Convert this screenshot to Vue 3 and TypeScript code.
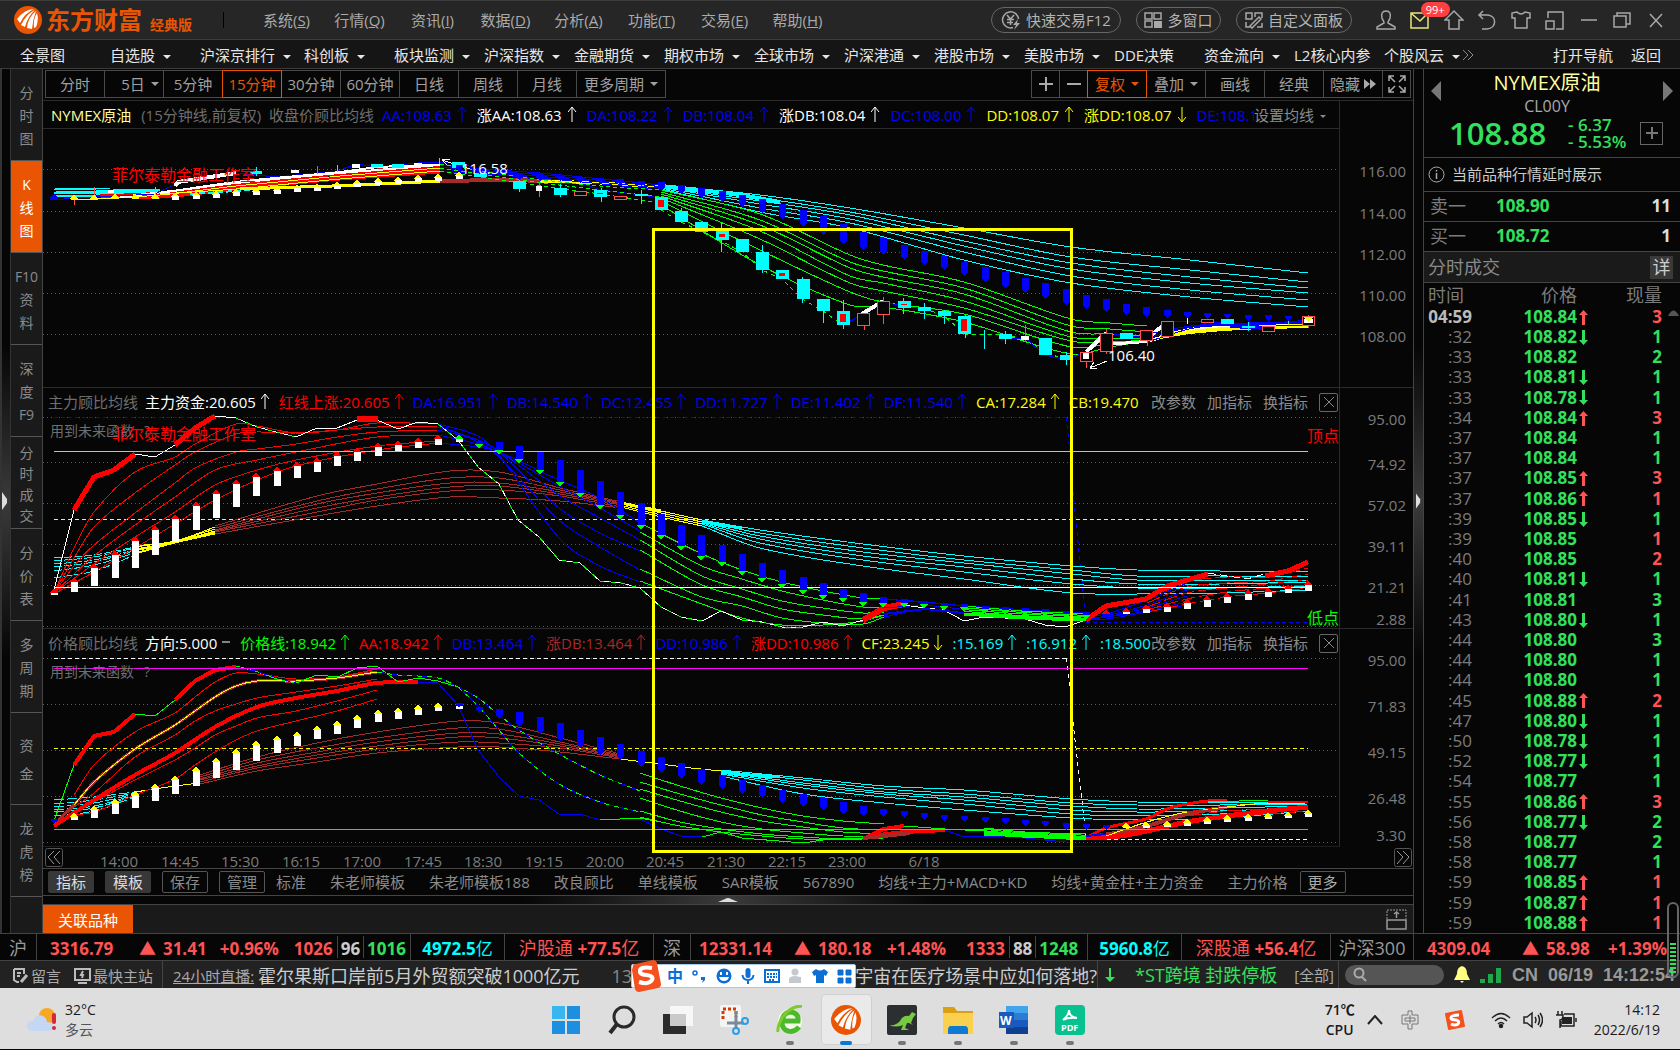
<script setup lang="ts">
type Pt = [number, number]
interface Line { d: string; c: string; w?: number; dash?: string }
interface Box { x: number; t: number; b: number; w: number; c: string; hollow?: boolean }
interface Wick { x: number; t: number; b: number; c: string }
interface Mark { d: string; c: string }
interface Label { x: number; y: number; t: string; c: string; cls?: string }
interface Reading { t: string; c: string; a?: 'up' | 'down' | 'flat' }
interface Panel {
  name: string
  top: number
  height: number
  grid: number[]
  axis: { y: number; t: string }[]
  lines: Line[]
  boxes: Box[]
  wicks: Wick[]
  marks: Mark[]
  labels: Label[]
}

const CYAN = '#00ffff'
const BLUE = '#0000ff'
const GREEN = '#00ff00'
const RED = '#ff0000'
const YELLOW = '#ffff00'
const BROWN = '#a52a2a'
const WHITE = '#ffffff'

const LEFT = 54
const STEP = 20.23
const LAST = 1308
const barX = (i: number): number => Math.round(LEFT + STEP * i)

const parse = (s: string): Pt[] =>
  s.trim().split(/\s+/).map((p) => p.split(',').map(Number) as Pt)

const straight = (s: string): string => 'M' + parse(s).map((p) => p.join(' ')).join('L')

const curveOf = (p: Pt[]): string => {
  let d = `M${p[0][0]} ${p[0][1]}`
  for (let i = 0; i < p.length - 1; i++) {
    const a = p[Math.max(0, i - 1)]
    const b = p[i]
    const c = p[i + 1]
    const e = p[Math.min(p.length - 1, i + 2)]
    const k = (c[0] - b[0]) / 3
    const mb = (c[1] - a[1]) / Math.max(1, c[0] - a[0])
    const mc = (e[1] - b[1]) / Math.max(1, e[0] - b[0])
    d += `C${b[0] + k} ${b[1] + mb * k} ${c[0] - k} ${c[1] - mc * k} ${c[0]} ${c[1]}`
  }
  return d
}
const smooth = (s: string): string => curveOf(parse(s))

/* A bundle of averages: each column is x:y1,y2,... and every row becomes one line. */
const bundle = (cols: string, c: string, dash?: string): Line[] => {
  const parsed = cols.trim().split(/\s+/).map((col) => {
    const [x, ys] = col.split(':')
    return { x: Number(x), ys: ys.split(',').map(Number) }
  })
  return parsed[0].ys.map((_, r) => ({ d: curveOf(parsed.map((q) => [q.x, q.ys[r]] as Pt)), c, dash }))
}

/* n evenly spread lines between an upper and a lower edge. */
const spread = (upper: string, lower: string, n: number, c: string): Line[] => {
  const u = parse(upper)
  const l = parse(lower)
  return Array.from({ length: n }, (_, k) => ({
    d: curveOf(u.map((p, i) => [p[0], p[1] + ((l[i][1] - p[1]) * k) / (n - 1)] as Pt)),
    c,
  }))
}

const level = (y: number, c: string, dash?: string, to = LAST, from = LEFT): Line => ({ d: `M${from} ${y}H${to}`, c, dash })
const ranges = (s: string): Pt[] => s.trim().split(/\s+/).map((p) => p.split('-').map(Number) as Pt)
const tipUp = (x: number, y: number, c: string): Mark => ({ d: `M${x - 4} ${y + 1}L${x} ${y - 4}L${x + 4} ${y + 1}Z`, c })
const tipDown = (x: number, y: number, c: string): Mark => ({ d: `M${x - 4} ${y - 1}L${x} ${y + 4}L${x + 4} ${y - 1}Z`, c })
const shield = (x: number, t: number, b: number): Mark => ({
  d: `M${x - 3} ${t}H${x + 4}V${Math.max(t + 2, b - 3)}L${x} ${b + 1}L${x - 3} ${Math.max(t + 2, b - 3)}Z`,
  c: BLUE,
})

/* ---------- price panel ---------- */
const priceShields = ranges(
  '165-170 168-173 171-176 174-179 175-180 176-180 177-182 178-183 179-184 181-185 182-190 185-193 188-197 191-201 195-206 199-212 204-218 210-226 216-234 224-243 232-249 238-254 245-259 251-264 256-269 262-275 267-281 272-287 278-292 283-298 289-304 295-308 299-311 304-314 307-316 310-317 312-317 313-318 314-318 315-320 315-320 316-320',
)
const priceTips = [198, 198, 197, 197, 197, 196, 195, 194, 192, 191, 190, 188, 187, 185, 183, 181, 180, 178, 177, 175]
const candle = (i: number, t: number, b: number, kind: 'down' | 'hot' | 'up'): Box[] => {
  const x = barX(i)
  if (kind === 'up') return [{ x: x - 6, t, b, w: 12, c: '#ff5050', hollow: true }]
  const body: Box = { x: x - 6, t, b, w: 13, c: CYAN }
  return kind === 'hot' ? [body, { x: x - 3, t: t + 3, b: b - 3, w: 6, c: RED }] : [body]
}
const price: Panel = {
  name: 'price',
  top: 129,
  height: 258,
  grid: [169, 211, 252, 293, 334],
  axis: [
    { y: 171, t: '116.00' }, { y: 213, t: '114.00' }, { y: 254, t: '112.00' },
    { y: 295, t: '110.00' }, { y: 336, t: '108.00' },
  ],
  lines: [
    ...spread('54,188 110,189 160,189', '54,197 110,196 160,195', 7, CYAN),
    ...spread('100,195 160,192 236,182 340,172 440,164', '100,197 160,198 236,190 340,180 440,173', 9, RED),
    { d: smooth('110,196 160,194 236,188 340,178 440,171'), c: RED, w: 4 },
    { d: smooth('74,200 160,195 236,186 340,176 440,168'), c: YELLOW },
    { d: smooth('160,194 236,189 340,179 440,171'), c: YELLOW },
    { d: smooth('120,197 180,190 236,183 340,173 440,165'), c: WHITE, w: 2 },
    { d: straight('190,194 236,191 262,189'), c: CYAN, w: 2, dash: '6 3' },
    { d: straight('54,200 74,198 94,197 155,194 175,184 195,180 236,173 276,177 337,171 357,164 377,167 418,163 440,162 461,163 480,170 500,172 519,177 539,180 560,184 580,183 601,190 641,195 661,198'), c: BLUE },
    { d: straight('175,186 178,182 236,173'), c: WHITE, w: 4 },
    { d: smooth('160,193 236,182 340,172 380,167 440,165'), c: WHITE, w: 2 },
    { d: smooth('240,189 300,187 360,185 440,181'), c: YELLOW, w: 3 },
    { d: straight('440,181 500,180 555,181'), c: BROWN, w: 4 },
    { d: smooth('540,181 600,183 661,187'), c: YELLOW, w: 3 },
    ...spread('440,165 480,169 540,173 661,185', '440,171 480,174 540,178 661,190', 4, BLUE),
    ...bundle('440:164,168,171 520:177,180,183 600:186,190,194 661:190,197,203', GREEN, '4 3'),
    { d: smooth('661,186 700,190 740,195 780,202'), c: CYAN, w: 4 },
    ...bundle('661:185,186,187,187,188,189 760:195,198,201,204,208,212 850:208,212,215,219,223,228 964:228,235,241,246,252,260 1071:247,257,263,269,276,283 1190:260,270,277,283,290,297 1308:273,282,288,293,300,307', CYAN),
    ...bundle('661:190,192,194,196,198,201,205 760:214,220,225,231,239,250,265 850:255,262,268,276,283,292,305 883:265,271,277,283,291,302,307 964:282,288,294,301,308,314,322 1071:319,326,332,337,341,347,354 1110:323,329,334,338,342,344,347 1147:326,332,336,338,340,341,341', GREEN),
    { d: straight('661,210 681,222 702,232 721,241 742,252 762,270 782,279 802,299 823,311 843,325'), c: GREEN, dash: '4 4' },
    { d: straight('924,308 944,316 965,334 1005,335 1025,339 1045,352 1066,360 1086,352'), c: GREEN, dash: '4 4' },
    { d: straight('843,325 864,314 883,302 903,306 924,309'), c: BLUE },
    { d: straight('1005,339 1025,338 1045,355 1066,360 1086,352 1106,333 1147,338 1168,322 1208,321 1240,326 1308,320'), c: BLUE },
    { d: straight('862,314 883,301'), c: WHITE, w: 4 },
    { d: straight('1086,352 1106,333'), c: WHITE, w: 4 },
    { d: straight('1147,338 1168,322'), c: WHITE, w: 4 },
    { d: smooth('1106,344 1147,341 1190,329 1240,325 1308,323'), c: WHITE, w: 3 },
    { d: smooth('1160,337 1190,332 1240,328 1308,326'), c: YELLOW, w: 4 },
    ...spread('1147,334 1200,325 1308,322', '1147,342 1200,327 1308,325', 3, BLUE),
    { d: straight('1230,326 1268,328'), c: BLUE, w: 4 },
    { d: 'M470 169L442 160M442 160L450 159M442 160L447 165', c: WHITE },
    { d: 'M1107 361L1090 368M1090 368L1094 362M1090 368L1097 368', c: WHITE },
  ],
  boxes: [
    { x: 108, t: 190, b: 193, w: 6, c: WHITE }, { x: 250, t: 171, b: 174, w: 12, c: CYAN },
    { x: 291, t: 170, b: 173, w: 8, c: WHITE }, { x: 352, t: 164, b: 168, w: 8, c: WHITE },
    { x: 371, t: 164, b: 167, w: 12, c: CYAN }, { x: 392, t: 164, b: 168, w: 12, c: CYAN },
    { x: 414, t: 163, b: 166, w: 8, c: WHITE }, { x: 452, t: 162, b: 168, w: 13, c: CYAN },
    { x: 474, t: 173, b: 177, w: 13, c: CYAN }, { x: 513, t: 181, b: 189, w: 13, c: CYAN },
    { x: 536, t: 186, b: 191, w: 6, c: WHITE },
    ...candle(25, 188, 195, 'down'), ...candle(26, 191, 195, 'up'), ...candle(27, 190, 197, 'hot'),
    ...candle(28, 196, 199, 'up'), ...candle(29, 194, 196, 'down'),
    ...candle(30, 197, 210, 'hot'), ...candle(31, 211, 222, 'down'), ...candle(32, 222, 232, 'down'),
    ...candle(33, 231, 240, 'hot'), ...candle(34, 239, 252, 'down'), ...candle(35, 252, 270, 'down'),
    ...candle(36, 270, 279, 'hot'), ...candle(37, 279, 299, 'down'), ...candle(38, 299, 311, 'down'),
    ...candle(39, 311, 325, 'hot'), ...candle(40, 313, 325, 'up'), ...candle(41, 301, 314, 'up'),
    ...candle(42, 301, 308, 'hot'), ...candle(43, 307, 311, 'down'), ...candle(44, 311, 316, 'down'),
    ...candle(45, 316, 334, 'hot'), ...candle(47, 334, 339, 'down'),
    { x: 1021, t: 336, b: 340, w: 8, c: WHITE }, ...candle(49, 338, 355, 'down'),
    ...candle(50, 355, 360, 'down'), ...candle(51, 352, 361, 'up'), { x: 1083, t: 353, b: 359, w: 6, c: WHITE },
    ...candle(52, 333, 351, 'up'), ...candle(53, 333, 339, 'down'), ...candle(54, 330, 340, 'up'),
    ...candle(55, 321, 336, 'up'), ...candle(57, 319, 322, 'up'), ...candle(58, 319, 324, 'down'),
    ...candle(59, 326, 328, 'down'), ...candle(60, 326, 331, 'up'), ...candle(62, 316, 325, 'up'),
    { x: 1304, t: 319, b: 323, w: 9, c: WHITE },
  ],
  wicks: [
    { x: 74, t: 196, b: 205, c: '#ff5050' }, { x: 94, t: 187, b: 197, c: '#ff5050' }, { x: 155, t: 187, b: 196, c: CYAN },
    { x: 256, t: 167, b: 176, c: CYAN }, { x: 317, t: 166, b: 174, c: '#ff5050' }, { x: 337, t: 165, b: 172, c: CYAN },
    { x: 439, t: 158, b: 164, c: CYAN }, { x: 519, t: 177, b: 192, c: CYAN }, { x: 539, t: 182, b: 197, c: '#ff5050' },
    { x: 560, t: 184, b: 197, c: CYAN }, { x: 601, t: 188, b: 202, c: CYAN }, { x: 641, t: 190, b: 204, c: CYAN },
    { x: 681, t: 208, b: 222, c: CYAN }, { x: 721, t: 223, b: 252, c: CYAN }, { x: 762, t: 245, b: 273, c: CYAN },
    { x: 802, t: 277, b: 303, c: CYAN }, { x: 823, t: 299, b: 323, c: CYAN }, { x: 843, t: 300, b: 329, c: CYAN },
    { x: 864, t: 325, b: 330, c: '#ff5050' }, { x: 883, t: 297, b: 324, c: '#ff5050' }, { x: 903, t: 298, b: 314, c: CYAN },
    { x: 924, t: 303, b: 319, c: CYAN }, { x: 944, t: 310, b: 324, c: CYAN }, { x: 965, t: 315, b: 338, c: CYAN },
    { x: 984, t: 330, b: 349, c: CYAN }, { x: 1005, t: 331, b: 344, c: CYAN }, { x: 1025, t: 325, b: 342, c: '#ff5050' },
    { x: 1066, t: 352, b: 365, c: CYAN }, { x: 1086, t: 361, b: 368, c: '#ff5050' }, { x: 1106, t: 329, b: 354, c: '#ff5050' },
    { x: 1147, t: 330, b: 346, c: '#ff5050' }, { x: 1187, t: 317, b: 324, c: WHITE }, { x: 1207, t: 314, b: 322, c: '#ff5050' },
    { x: 1248, t: 322, b: 331, c: CYAN }, { x: 1288, t: 319, b: 324, c: CYAN }, { x: 1308, t: 315, b: 328, c: '#ff5050' },
  ],
  marks: [
    { d: 'M50 197L54 194L58 197V200H50Z', c: BLUE },
    ...priceTips.flatMap((y, k): Mark[] => {
      const x = barX(k + 1)
      return [tipUp(x, y, YELLOW), { d: `M${x - 3} ${y}H${x + 4}V${k < 5 ? y + 2 : y + 4}H${x - 3}Z`, c: k < 5 ? YELLOW : WHITE }]
    }),
    ...priceShields.map(([t, b], k) => shield(barX(k + 20), t, b)),
    { d: 'M1304 317H1313L1308 322Z', c: YELLOW },
  ],
  labels: [
    { x: 112, y: 181, t: '菲尔泰勒金融工作室', c: RED, cls: 'mark' },
    { x: 461, y: 174, t: '116.58', c: WHITE },
    { x: 1108, y: 361, t: '106.40', c: WHITE },
  ],
}

/* ---------- main-force panel ---------- */
const forceBars = ranges(
  '593-595 582-592 568-586 555-578 541-568 530-555 519-542 506-530 494-518 484-507 477-496 471-486 466-478 462-472 456-466 452-461 447-456 445-451 442-448 439-445 439-442 441-444 442-450 446-459 452-470 460-482 470-493 481-505 492-515 503-525 514-535 525-546 535-556 545-562 554-571 563-578 570-584 577-590 583-595 589-598 593-602 597-603 599-603 601-604 603-606 604-607 606-609 607-610 608-611 609-612 611-614 612-615 614-616 612-614 609-613 607-612 603-609 600-607 597-603 594-600 592-597 589-593 585-591',
)
const force: Panel = {
  name: 'force',
  top: 415,
  height: 213,
  grid: [417, 462, 503, 544, 585, 626],
  axis: [
    { y: 419, t: '95.00' }, { y: 464, t: '74.92' }, { y: 505, t: '57.02' },
    { y: 546, t: '39.11' }, { y: 587, t: '21.21' }, { y: 619, t: '2.88' },
  ],
  lines: [
    level(417, BLUE, '4 3', 1066),
    { d: straight('1066,417 1071,460'), c: BLUE, dash: '4 4' },
    { d: straight('1073,492 1086,621'), c: BLUE, dash: '4 4' },
    level(622, BLUE, '4 3', LAST, 1086),
    level(519, YELLOW, '4 3'),
    ...bundle('54:558,561,564,567,571,578 94:555,557,560,562,565,571 135:547,548,550,551,553,555', CYAN, '8 2'),
    ...bundle('135:546,547,549,551,553,554 175:541,541,542,542,542,543 215:527,529,531,532,533,534', YELLOW),
    { d: straight('135,550 175,542 215,532'), c: YELLOW, w: 2 },
    ...bundle('215:526,528,530,531,532,534 317:496,501,504,508,512,516 377:484,489,493,497,500,506 450:471,478,483,487,491,497 499:472,478,483,486,490,498 560:488,490,492,494,496,501 621:502,503,504,505,507,508', BROWN),
    ...spread('621,502 661,511 702,520', '621,507 661,517 702,526', 4, YELLOW),
    { d: straight('621,503 640,507 661,511'), c: YELLOW, w: 3 },
    { d: straight('702,521 721,525 742,528'), c: CYAN, w: 3 },
    ...bundle('702:520,521,522,523,524,526 760:530,533,536,539,543,548 863:544,548,552,556,560,566 964:556,560,563,567,572,579 1072:566,570,574,579,584,593 1137:570,576,580,584,588,594 1220:571,576,580,584,588,593 1308:571,577,580,582,586,590', CYAN),
    ...bundle('54:593,593,593 74:548,558,566 94:512,527,545 135:472,493,513 175:457,465,483 195:444,452,468 236:424,434,452 257:426,432,449 296:433,433,444 337:430,430,437 377:423,427,432 438:424,426,430', RED),
    ...bundle('54:593,593,594 94:556,564,572 135:525,537,548 175:497,512,524 215:470,485,500 257:460,470,480 296:452,460,466 377:437,446,450 438:435,441,443', RED),
    ...bundle('438:424,425,427,430,435,443 478:436,442,440,440,444,447 499:455,457,452,451,452,452 559:538,520,508,495,486,480 600:566,547,533,518,508,498 640:582,570,551,540,531,523', BLUE),
    ...bundle('640:581,569,550,540,532,523 702:604,597,585,576,566,554 742:618,606,597,589,579,570 782:625,618,609,601,591,582 823:625,623,615,608,600,591 863:621,624,619,613,607,598 884:615,617,615,612,607,599', GREEN),
    { d: straight('54,590 74,510 94,477 114,470 135,454 155,457 175,445 195,428 215,416 236,418 257,427 276,432 296,437 317,428 337,428 357,420 377,420 398,429 418,422 438,424 458,440 478,467 499,484 518,520 539,537 559,560 580,563 600,581 621,583 640,588 661,607 681,617 702,621 721,611 742,620 762,622 782,627 803,627 823,622 843,626 863,620 884,608 904,605 925,608 944,610 964,621 984,617 1025,619 1045,625 1065,627 1086,620'), c: WHITE },
    { d: straight('236,418 257,427 276,432 296,437'), c: GREEN, dash: '6 5' },
    { d: straight('438,424 458,440 478,467 499,484 518,520 539,537 559,560 580,563 600,581 621,583 640,588 661,607 681,617 702,621'), c: GREEN, dash: '6 5' },
    { d: straight('742,620 762,622 782,627 803,627'), c: GREEN, dash: '6 5' },
    { d: straight('74,510 94,477 114,470 135,454'), c: RED, w: 5 },
    { d: straight('175,445 195,428 215,416'), c: RED, w: 5 },
    { d: straight('357,419 378,419'), c: RED, w: 6 },
    { d: straight('863,620 884,608 904,604'), c: RED, w: 6 },
    ...spread('884,599 925,602 964,606', '884,617 925,609 964,613', 3, BLUE),
    { d: straight('884,614 925,609 964,613'), c: BLUE, w: 2 },
    { d: straight('884,599 964,606 1045,611 1086,613'), c: BLUE },
    ...spread('964,606 1025,611 1086,614', '964,615 1025,619 1086,621', 6, GREEN),
    { d: straight('964,614 1025,617 1086,620'), c: GREEN, w: 3 },
    ...bundle('1086:617,619,620,620,620 1106:614,616,617,617,619 1147:600,605,608,611,612 1187:583,590,596,602,605', BLUE),
    ...bundle('1147:599,603,607,610,612 1187:582,587,593,599,604 1227:577,583,588,592,597 1268:577,581,584,588,593 1308:568,574,580,585,588', RED, '14 4'),
    { d: straight('1086,620 1106,606 1146,599 1167,586 1187,580 1208,574'), c: RED, w: 5 },
    { d: straight('1208,573 1227,576 1247,579 1268,573'), c: WHITE, dash: '8 4' },
    { d: straight('1265,576 1288,571 1308,562'), c: RED, w: 5 },
    level(451, '#b8e020'),
    level(587, WHITE),
  ],
  boxes: forceBars.map(([t, b], i) => ({ x: barX(i) - 3, t, b, w: 7, c: i > 20 && i < 53 ? BLUE : WHITE })),
  wicks: [],
  marks: forceBars.map(([t, b], i) =>
    i <= 19 || i >= 52 ? tipUp(barX(i), t - 1, RED) : i === 20 ? tipUp(barX(i), t - 1, GREEN) : tipDown(barX(i), b + 1, GREEN),
  ),
  labels: [
    { x: 50, y: 436, t: '用到未来函数', c: '#6e6e6e', cls: 'note' },
    { x: 144, y: 436, t: '?', c: '#6e6e6e', cls: 'note' },
    { x: 112, y: 440, t: '菲尔泰勒金融工作室', c: RED, cls: 'mark' },
    { x: 1307, y: 442, t: '顶点', c: RED, cls: 'mark' },
    { x: 1307, y: 624, t: '低点', c: GREEN, cls: 'mark' },
  ],
}

/* ---------- price-average panel ---------- */
const trendBars = ranges(
  '819-822 816-820 809-818 802-814 794-808 787-801 779-794 770-786 761-778 752-770 744-761 739-753 735-746 729-739 724-734 718-728 713-722 711-719 708-715 706-711 706-709 707-712 709-718 712-726 717-733 723-740 730-747 737-754 744-759 751-766 757-772 763-778 769-784 775-788 780-793 785-797 790-802 794-806 798-809 802-813 806-815 809-816 811-817 813-819 815-820 816-821 817-822 818-823 820-825 821-826 823-829 824-829 825-829 826-828 825-828 824-827 822-826 820-824 818-822 817-821 816-819 815-818 813-817',
)
const trend: Panel = {
  name: 'trend',
  top: 656,
  height: 212,
  grid: [658, 704, 750, 796, 842],
  axis: [
    { y: 660, t: '95.00' }, { y: 706, t: '71.83' }, { y: 752, t: '49.15' },
    { y: 798, t: '26.48' }, { y: 835, t: '3.30' },
  ],
  lines: [
    { d: straight('1066,658 1071,695'), c: WHITE, dash: '4 4' },
    { d: straight('1073,722 1086,836'), c: WHITE, dash: '4 4' },
    level(839, WHITE, '4 3', LAST, 1086),
    level(748, YELLOW, '4 3'),
    ...bundle('54:800,804,807,810,812,816 94:797,800,803,806,808,811 135:792,793,794,795,796,797', CYAN, '10 3'),
    ...bundle('200:775,777,779,780,782,784 257:757,760,763,766,768,771 317:743,748,752,755,758,762 377:732,738,742,746,749,753 458:721,728,733,737,742,747 499:723,729,734,738,743,747 560:738,742,744,746,748,752 620:754,755,756,757,758,759', BROWN),
    { d: smooth('135,792 175,786 200,783'), c: YELLOW },
    { d: straight('620,759 660,764 691,768 721,771'), c: YELLOW },
    { d: straight('721,772 750,775 780,777'), c: CYAN, w: 3 },
    ...bundle('721:770,771,772,773,774,776 803:778,780,783,785,788,794 884:786,789,792,794,797,803 964:790,794,797,800,804,810 1072:799,803,806,810,814,818 1137:802,805,809,812,816,820 1220:803,805,808,811,814,818 1308:802,804,806,807,809,811', CYAN),
    ...bundle('74:795,807,812,815 94:765,793,802,812 135:732,757,780,795 175:713,735,760,779 195:697,721,748,765 215:682,711,735,752 236:673,704,726,740 257:674,698,718,731 296:679,692,711,721 337:677,686,701,711 377:669,679,690,699', RED),
    ...bundle('296:681,682 337:677,679 377:669,671', RED),
    { d: smooth('54,824 74,805 94,782 135,749 175,725 215,697 236,686 257,681 296,681 337,678 377,672'), c: BROWN, w: 3 },
    { d: smooth('74,805 94,782 135,749 175,725 215,697 236,686 257,681 296,681 337,678 377,672'), c: YELLOW },
    { d: smooth('54,826 94,800 135,775 175,753 215,727 257,707 296,698 337,691 377,683 418,682'), c: RED, w: 4 },
    { d: straight('54,821 74,765 94,736 114,732 135,714 155,716 175,700 195,681 215,670 236,666 255,671 277,679 296,683 317,675 338,677 357,668 377,666 398,682 418,678 438,681 458,687'), c: GREEN },
    { d: straight('236,667 255,671 277,678 296,683'), c: BLUE, dash: '8 4' },
    { d: straight('74,765 94,736 114,732 135,714'), c: RED, w: 4 },
    { d: straight('175,700 195,681 215,670 236,667'), c: RED, w: 4 },
    { d: straight('418,682 438,683 458,705 478,750 499,777 519,796 539,800 559,814 580,814 600,820'), c: BLUE },
    { d: straight('600,820 640,818 661,822'), c: GREEN },
    { d: straight('640,819 661,829 681,836 702,837'), c: BLUE },
    { d: smooth('377,672 398,675 438,678 458,687 478,698 499,715 519,730 559,754 600,775 640,791'), c: BLUE },
    { d: smooth('377,672 398,675 438,678 458,687 478,698 499,715 519,730 559,754 600,775 640,791'), c: GREEN, dash: '5 5' },
    { d: smooth('458,687 478,706 499,730 519,753 559,784 600,802 640,812'), c: BLUE },
    { d: smooth('458,687 478,706 499,730 519,753 559,784 600,802 640,812'), c: GREEN, dash: '5 5' },
    ...bundle('640:773,782,789,798,811,817 680:786,794,801,811,822,826 721:798,805,812,822,829,832 762:808,815,821,829,834,836 803:816,822,827,833,837,839 843:821,828,832,836,839,839 884:824,830,834,836,838,838', GREEN),
    { d: straight('702,837 721,832 742,838 803,843 823,840 863,839'), c: GREEN },
    { d: straight('863,839 884,829 904,826'), c: RED, w: 4 },
    { d: straight('870,836 904,832 945,830'), c: RED, w: 4 },
    { d: straight('863,838 884,836 910,833'), c: BROWN, w: 4 },
    { d: straight('945,830 964,837 1005,836 1045,840 1066,842'), c: BLUE },
    { d: straight('904,826 945,829 984,831'), c: GREEN },
    ...spread('984,828 1025,832 1086,834', '964,835 1025,837 1086,840', 6, GREEN),
    { d: straight('984,833 1030,836 1086,838'), c: GREEN, w: 4 },
    { d: smooth('1086,838 1106,828 1146,819 1167,809 1187,804 1208,801 1227,801'), c: RED, w: 3 },
    { d: smooth('1086,838 1120,832 1147,826 1187,814 1227,807'), c: BROWN, w: 4 },
    { d: smooth('1086,838 1120,836 1147,831 1187,822 1227,816 1268,811 1308,807'), c: RED, w: 5 },
    { d: smooth('1106,836 1147,822 1187,812 1227,807 1268,803 1308,803'), c: YELLOW },
    ...bundle('1187:812,816,820 1227:806,811,817 1268:803,809,814 1308:802,808,811', RED, '16 4'),
    { d: straight('1208,801 1230,802 1248,800 1268,801 1290,802'), c: GREEN },
    { d: straight('1268,802 1308,802'), c: RED, w: 2 },
    { d: straight('1240,805 1268,803 1305,803'), c: YELLOW },
    { d: straight('1086,836 1106,834'), c: BLUE, w: 2 },
    level(658, WHITE, '4 3', 1066),
    { d: `M${LEFT} 668H${LAST}`, c: '#ff00ff' },
    level(829, GREEN),
    { d: 'M43 846H1340', c: '#1e1e1e' },
  ],
  boxes: trendBars.flatMap(([t, b], i): Box[] => ((i > 0 && i < 21) || i >= 53 ? [{ x: barX(i) - 3, t, b, w: 7, c: WHITE }] : [])),
  wicks: [],
  marks: trendBars.map(([t, b], i) => ((i > 0 && i < 20) || i >= 53 ? tipUp(barX(i), t, YELLOW) : shield(barX(i), i === 20 ? t - 3 : t, i === 20 ? b - 3 : b))),
  labels: [
    { x: 50, y: 677, t: '用到未来函数', c: '#6e6e6e', cls: 'note' },
    { x: 144, y: 677, t: '?', c: '#6e6e6e', cls: 'note' },
    ...['14:00', '14:45', '15:30', '16:15', '17:00', '17:45', '18:30', '19:15', '20:00', '20:45', '21:30', '22:15', '23:00', '6/18'].map(
      (t, k): Label => ({ x: t === '6/18' ? 924 : Math.round(119 + 60.7 * k), y: 867, t, c: '#7c7c7c', cls: 'mid' }),
    ),
  ],
}

const priceReadings: Reading[] = [
  { t: 'AA:108.63', c: BLUE, a: 'up' }, { t: '涨AA:108.63', c: WHITE, a: 'up' }, { t: 'DA:108.22', c: BLUE, a: 'up' },
  { t: 'DB:108.04', c: BLUE, a: 'up' }, { t: '涨DB:108.04', c: WHITE, a: 'up' }, { t: 'DC:108.00', c: BLUE, a: 'up' },
  { t: 'DD:108.07', c: YELLOW, a: 'up' }, { t: '涨DD:108.07', c: YELLOW, a: 'down' }, { t: 'DE:108.17', c: BLUE },
]
const forceReadings: Reading[] = [
  { t: '主力资金:20.605', c: WHITE, a: 'up' }, { t: '红线上涨:20.605', c: RED, a: 'up' }, { t: 'DA:16.951', c: BLUE, a: 'up' },
  { t: 'DB:14.540', c: BLUE, a: 'up' }, { t: 'DC:12.455', c: BLUE, a: 'up' }, { t: 'DD:11.727', c: BLUE, a: 'up' },
  { t: 'DE:11.402', c: BLUE, a: 'up' }, { t: 'DF:11.540', c: BLUE, a: 'up' }, { t: 'CA:17.284', c: YELLOW, a: 'up' },
  { t: 'CB:19.470', c: YELLOW },
]
const trendReadings: Reading[] = [
  { t: '方向:5.000', c: WHITE, a: 'flat' }, { t: '价格线:18.942', c: GREEN, a: 'up' }, { t: 'AA:18.942', c: RED, a: 'up' },
  { t: 'DB:13.464', c: BLUE, a: 'up' }, { t: '涨DB:13.464', c: BROWN, a: 'up' }, { t: 'DD:10.986', c: BLUE, a: 'up' },
  { t: '涨DD:10.986', c: RED, a: 'up' }, { t: 'CF:23.245', c: YELLOW, a: 'down' }, { t: ':15.169', c: CYAN, a: 'up' },
  { t: ':16.912', c: CYAN, a: 'up' }, { t: ':18.500', c: CYAN },
]
const charts = [
  { panel: price, title: '收盘价顾比均线', readings: priceReadings },
  { panel: force, title: '主力顾比均线', readings: forceReadings },
  { panel: trend, title: '价格顾比均线', readings: trendReadings },
]
const arrowPath = { up: 'M4 16V1M0 6L4 1L8 6', down: 'M4 1V16M0 11L4 16L8 11', flat: 'M0 8H8' }

const menus = [['系统', 'S'], ['行情', 'Q'], ['资讯', 'I'], ['数据', 'D'], ['分析', 'A'], ['功能', 'T'], ['交易', 'E'], ['帮助', 'H']]
const navs: { t: string; drop: boolean }[] = [
  { t: '全景图', drop: false }, { t: '自选股', drop: true }, { t: '沪深京排行', drop: true }, { t: '科创板', drop: true },
  { t: '板块监测', drop: true }, { t: '沪深指数', drop: true }, { t: '金融期货', drop: true }, { t: '期权市场', drop: true },
  { t: '全球市场', drop: true }, { t: '沪深港通', drop: true }, { t: '港股市场', drop: true }, { t: '美股市场', drop: true },
  { t: 'DDE决策', drop: false }, { t: '资金流向', drop: true }, { t: 'L2核心内参', drop: false }, { t: '个股风云', drop: true },
]
const periods = ['分时', '5日', '5分钟', '15分钟', '30分钟', '60分钟', '日线', '周线', '月线', '更多周期']
const sideTabs: string[][] = [
  ['分', '时', '图'], ['K', '线', '图'], ['F10', '资', '料'], ['深', '度', 'F9'], ['分', '时', '成', '交'],
  ['分', '价', '表'], ['多', '周', '期'], ['资', '金'], ['龙', '虎', '榜'],
]
const templates = ['标准', '朱老师模板', '朱老师模板188', '改良顾比', '单线模板', 'SAR模板', '567890', '均线+主力+MACD+KD', '均线+黄金柱+主力资金', '主力价格']

interface Tick { time: string; price: string; dir: string; vol: string; hot: boolean }
const ticks: Tick[] = `04:59 84 u 3r|:32 82 d 1g|:33 82 - 2g|:33 81 d 1g|:33 78 d 1g|:34 84 u 3r|:37 84 - 1g|:37 84 - 1g|:37 85 u 3r|:37 86 u 1r|:39 85 d 1g|:39 85 - 1r|:40 85 - 2r|:40 81 d 1g|:41 81 - 3g|:43 80 d 1g|:44 80 - 3g|:44 80 - 1g|:44 80 - 1g|:45 88 u 2r|:47 80 d 1g|:50 78 d 1g|:52 77 d 1g|:54 77 - 1g|:55 86 u 3r|:56 77 d 2g|:58 77 - 2g|:58 77 - 1g|:59 85 u 1r|:59 87 u 1r|:59 88 u 1r`
  .split('|')
  .map((row) => {
    const [time, cents, dir, v] = row.split(' ')
    return { time, price: '108.' + cents, dir, vol: v[0], hot: v[1] === 'r' }
  })
</script>

<template>
  <div class="app">
    <header class="titlebar">
      <div class="brand">
        <svg class="logo" viewBox="0 0 28 28" width="28" height="28"><circle cx="14" cy="14" r="14" fill="#ea5504" /><path d="M3 13Q11 3 20 3Q11 7 6 17Z M7 19Q13 7 21 4Q14 10 11 21Z M13 22Q14 11 22 5Q19 13 18 23Z M20 22Q19 13 23 7Q25 14 22 21Z" fill="#fff" /></svg>
        <strong>东方财富</strong><span>经典版</span>
      </div>
      <nav class="menus">
        <button v-for="m in menus" :key="m[0]" type="button">{{ m[0] }}(<u>{{ m[1] }}</u>)</button>
      </nav>
      <div class="quick">
        <button type="button" class="w-fast"><svg width="20" height="20" viewBox="0 0 20 20"><path d="M12 17.500A8 8 0 1 1 17.500 9M6 5L9.500 9L13 5M9.500 9V15M6 9.500H13M6 12.500H12" /><path d="M17 9L12 15H15L13 20L19 13H16Z" fill="#a8a8a8" stroke="none" /></svg>快速交易F12</button>
        <button type="button" class="w-multi"><svg width="18" height="18" viewBox="0 0 18 18"><path d="M1 2H8V8H1ZM10 2H17V8H10ZM1 10H8V16H1Z" /><path d="M10 10H18V17H10Z" fill="#a8a8a8" stroke="none" /></svg>多窗口</button>
        <button type="button" class="w-panel"><svg width="18" height="18" viewBox="0 0 18 18"><path d="M1 2H7V8H1ZM17 7V2H10V6M1 11V16H5M12 16H17V12M5 15L14 6L16 8L7 17Z" /></svg>自定义面板</button>
      </div>
      <div class="window-tools">
        <button type="button" aria-label="用户"><svg width="20" height="22" viewBox="0 0 20 22"><path d="M10 2C14 2 15 5 14 9C13 12 12 12 12 14L19 18V20H1V18L8 14C8 12 7 12 6 9C5 5 6 2 10 2Z" /></svg></button>
        <button type="button" aria-label="消息" class="mail"><svg width="20" height="22" viewBox="0 0 20 22"><path d="M1 4H18V19H1ZM2 5L10 12L17 5" /></svg><b>99+</b></button>
        <button type="button" aria-label="主页"><svg width="20" height="22" viewBox="0 0 20 22"><path d="M10 2L1 11H5V20H15V11H19Z" /></svg></button>
        <button type="button" aria-label="撤销"><svg width="20" height="22" viewBox="0 0 20 22"><path d="M6 2L2 6L6 10M2 6H11C20 7 20 19 10 20H5" /></svg></button>
        <button type="button" aria-label="皮肤"><svg width="20" height="22" viewBox="0 0 20 22"><path d="M6 3L1 4V9H4V19H16V9H19V4L14 3Q10 7 6 3Z" /></svg></button>
        <button type="button" aria-label="小窗"><svg width="20" height="22" viewBox="0 0 20 22"><path d="M3 9V3H18V20H11M1 12H9V20H1Z" /></svg></button>
        <button type="button" aria-label="最小化"><svg width="20" height="22" viewBox="0 0 20 22"><path d="M2 11H18" /></svg></button>
        <button type="button" aria-label="还原"><svg width="20" height="22" viewBox="0 0 20 22"><path d="M2 7H14V18H2ZM5 7V4H18V15H14" /></svg></button>
        <button type="button" aria-label="关闭"><svg width="20" height="22" viewBox="0 0 20 22"><path d="M4 5L16 18M16 5L4 18" /></svg></button>
      </div>
    </header>

    <nav class="navbar">
      <a v-for="n in navs" :key="n.t" href="#" :class="{ wide: n.t === '沪深京排行' }">{{ n.t }}<i v-if="n.drop" class="caret"></i></a>
      <svg class="more" width="12" height="12" viewBox="0 0 12 12"><path d="M1 1L6 6L1 11M6 1L11 6L6 11" fill="none" stroke="#8a8a8a" /></svg>
      <a href="#" class="tail">打开导航</a><a href="#" class="tail">返回</a>
    </nav>

    <div class="work">
      <div class="edge left"><svg width="6" height="20" viewBox="0 0 6 20"><path d="M0 1L5 8V12L0 19Z" fill="#ddd" /></svg></div>
      <aside class="side">
        <button v-for="(tab, k) in sideTabs" :key="k" type="button" :class="{ on: k === 1, four: tab.length === 4, two: tab.length === 2 }">
          <span v-for="(ch, j) in tab" :key="j">{{ ch }}</span>
        </button>
      </aside>

      <main class="main">
        <div class="toolbar">
          <div class="group">
            <button v-for="p in periods" :key="p" type="button" :class="{ on: p === '15分钟', long: p === '更多周期', days: p === '5日' }">{{ p }}<i v-if="p === '5日' || p === '更多周期'" class="caret"></i></button>
          </div>
          <div class="group">
            <button type="button" class="sq" aria-label="放大"><svg width="14" height="14" viewBox="0 0 14 14"><path d="M0 7H14M7 0V14" stroke="#aaa" stroke-width="2" /></svg></button>
            <button type="button" class="sq" aria-label="缩小"><svg width="14" height="14" viewBox="0 0 14 14"><path d="M0 7H14" stroke="#aaa" stroke-width="2" /></svg></button>
            <button type="button" class="on">复权<i class="caret"></i></button>
            <button type="button">叠加<i class="caret"></i></button>
            <button type="button">画线</button>
            <button type="button">经典</button>
            <button type="button">隐藏<svg class="ff" width="12" height="12" viewBox="0 0 12 12"><path d="M0 1L6 6L0 11ZM6 1L12 6L6 11Z" fill="#aaa" /></svg></button>
            <button type="button" class="sq" aria-label="全屏"><svg width="18" height="18" viewBox="0 0 18 18"><path d="M1 6V1H6M1 1L7 7M12 1H17V6M17 1L11 7M1 12V17H6M1 17L7 11M12 17H17V12M17 17L11 11" stroke="#aaa" stroke-width="1.500" fill="none" /></svg></button>
          </div>
        </div>

        <section v-for="(c, k) in charts" :key="c.panel.name" class="chart" :class="c.panel.name">
          <div class="head">
            <div class="legend">
              <template v-if="k === 0"><span class="symbol">NYMEX原油</span><span class="dim pad">(15分钟线,前复权)</span></template>
              <span class="dim pad">{{ c.title }}</span>
              <span v-for="r in c.readings" :key="r.t" class="reading" :style="{ color: r.c }">{{ r.t }}<svg v-if="r.a" width="9" height="17" viewBox="0 0 9 17"><path :d="arrowPath[r.a]" fill="none" stroke="currentColor" /></svg></span>
            </div>
            <div v-if="k === 0" class="opts"><button type="button">设置均线<i class="caret"></i></button></div>
            <div v-else class="opts three">
              <button type="button">改参数</button><button type="button">加指标</button><button type="button">换指标</button>
              <button type="button" class="close" aria-label="关闭指标"><svg width="12" height="12" viewBox="0 0 12 12"><path d="M1 1L11 11M11 1L1 11" stroke="#8a8a8a" /></svg></button>
            </div>
            <div class="gutter"></div>
          </div>
          <svg class="plot" :viewBox="`43 ${c.panel.top} 1370 ${c.panel.height}`">
            <g shape-rendering="crispEdges">
              <path v-for="y in c.panel.grid" :key="y" :d="`M43 ${y}.5H1343`" stroke="#5a5a5a" stroke-dasharray="1 3" />
              <path :d="`M1339.5 ${c.panel.top}V${k === 2 ? 846 : c.panel.top + c.panel.height}`" stroke="#2a2a2a" />
              <path v-for="(l, i) in c.panel.lines" :key="i" :d="l.d" :stroke="l.c" :stroke-width="l.w ?? 1" :stroke-dasharray="l.dash" stroke-linejoin="round" fill="none" />
              <path v-for="(w, i) in c.panel.wicks" :key="'w' + i" :d="`M${w.x} ${w.t}V${w.b}`" :stroke="w.c" />
              <rect v-for="(b, i) in c.panel.boxes" :key="'b' + i" :x="b.x" :y="b.t" :width="b.w" :height="Math.max(1, b.b - b.t)" :fill="b.hollow ? '#060606' : b.c" :stroke="b.hollow ? b.c : 'none'" />
              <path v-for="(m, i) in c.panel.marks" :key="'m' + i" :d="m.d" :fill="m.c" />
            </g>
            <text v-for="(t, i) in c.panel.labels" :key="'t' + i" :x="t.x" :y="t.y" :fill="t.c" :class="t.cls">{{ t.t }}</text>
            <text v-for="a in c.panel.axis" :key="a.t" x="1406" :y="a.y + 6" class="axis">{{ a.t }}</text>
            <g v-if="k === 2" fill="none" stroke="#555">
              <rect x="45.500" y="848.500" width="17" height="18" rx="2" /><path d="M54 851L48 857L54 864M60 851L54 857L60 864" stroke="#999" />
              <rect x="1394.500" y="848.500" width="17" height="18" rx="2" /><path d="M1397 851L1403 857L1397 864M1403 851L1409 857L1403 864" stroke="#999" />
            </g>
          </svg>
        </section>
        <svg class="focus-box" viewBox="43 69 1370 865"><rect x="653.500" y="229.500" width="418" height="622" fill="none" stroke="#ffff00" stroke-width="3" /></svg>

        <div class="templates">
          <button type="button" class="solid">指标</button><button type="button" class="solid">模板</button>
          <button type="button" class="line">保存</button><button type="button" class="line">管理</button>
          <a v-for="t in templates" :key="t" href="#">{{ t }}</a>
          <button type="button" class="line last">更多</button>
        </div>
        <div class="handle"><svg width="20" height="4" viewBox="0 0 20 4"><path d="M0 4L7 1Q10 -1 13 1L20 4Z" fill="#ddd" /></svg></div>
        <div class="related">
          <button type="button">关联品种</button>
          <svg width="21" height="21" viewBox="0 0 21 21" fill="none" stroke="#999"><path d="M1 10V1H20V10" stroke-dasharray="2 1" /><path d="M1 11H20V20H1ZM10.500 9V3M8 5L10.500 3L13 5" stroke-width="1.500" /></svg>
        </div>
      </main>

      <div class="edge right"><svg width="5" height="20" viewBox="0 0 6 20"><path d="M0 1L5 8V12L0 19Z" fill="#ddd" /></svg></div>

      <aside class="quote">
        <div class="summary">
          <svg width="10" height="20" viewBox="0 0 10 20"><path d="M10 0V20L0 10Z" fill="#777" /></svg>
          <h1>NYMEX原油</h1>
          <svg width="10" height="20" viewBox="0 0 10 20"><path d="M0 0V20L10 10Z" fill="#777" /></svg>
          <p class="code">CL00Y</p>
          <div class="last-price">
            <strong>108.88</strong>
            <div><span>- 6.37</span><span>- 5.53%</span></div>
            <button type="button" aria-label="加自选"><svg width="12" height="12" viewBox="0 0 12 12"><path d="M6 0V12M0 6H12" stroke="#777" stroke-width="2" /></svg></button>
          </div>
        </div>
        <p class="notice"><svg width="17" height="17" viewBox="0 0 17 17" fill="none" stroke="#aaa"><circle cx="8.500" cy="8.500" r="7.500" /><path d="M8.500 7V13M8.500 4V5.500" stroke-width="1.500" /></svg>当前品种行情延时展示</p>
        <dl class="depth">
          <div><dt>卖一</dt><dd class="g">108.90</dd><dd>11</dd></div>
          <div><dt>买一</dt><dd class="g">108.72</dd><dd>1</dd></div>
        </dl>
        <div class="ticks-head"><h2>分时成交</h2><button type="button">详</button></div>
        <table class="ticks">
          <thead><tr><th>时间</th><th>价格</th><th></th><th>现量</th></tr></thead>
          <tbody>
            <tr v-for="(t, i) in ticks" :key="i">
              <td :class="{ first: i === 0 }">{{ t.time }}</td>
              <td class="p">{{ t.price }}</td>
              <td class="ar"><svg v-if="t.dir === 'u'" width="9" height="15" viewBox="0 0 9 15"><path d="M3 15V5H0L4.500 0L9 5H6V15Z" fill="#ff5454" /></svg><svg v-if="t.dir === 'd'" width="9" height="15" viewBox="0 0 9 15"><path d="M3 0V10H0L4.500 15L9 10H6V0Z" fill="#33e05c" /></svg></td>
              <td class="v" :class="{ hot: t.hot }">{{ t.vol }}</td>
            </tr>
          </tbody>
        </table>
        <svg class="scroll-up" width="11" height="6" viewBox="0 0 11 6"><path d="M0 6Q5.500 -5 11 6Z" fill="#555" /></svg>
      </aside>
    </div>

    <div class="indices">
      <div class="nm c1">沪</div>
      <div class="ix"><b class="v1">3316.79</b><b class="tri">▲</b><b class="v2">31.41</b><b class="v3">+0.96%</b><b class="n">1026</b><b class="n w">96</b><b class="n g">1016</b></div>
      <div class="amt"><b>4972.5</b>亿</div>
      <div class="thru">沪股通 <b>+77.5</b>亿</div>
      <div class="nm c2">深</div>
      <div class="ix wide"><b class="v1">12331.14</b><b class="tri">▲</b><b class="v2">180.18</b><b class="v3">+1.48%</b><b class="n">1333</b><b class="n w">88</b><b class="n g">1248</b></div>
      <div class="amt"><b>5960.8</b>亿</div>
      <div class="thru">深股通 <b>+56.4</b>亿</div>
      <div class="nm c3">沪深300</div>
      <div class="ix end"><b class="v1">4309.04</b><b class="tri">▲</b><b class="v2">58.98</b><b class="v3">+1.39%</b></div>
    </div>

    <div class="news">
      <div class="links">
        <a href="#"><svg width="17" height="18" viewBox="0 0 17 18" fill="none" stroke="#bbb" stroke-width="2"><path d="M2 2H12V7M2 2V13L5 15H7M5 6H9M5 9H8" /><path d="M9 15L15 8" stroke-width="3" /></svg>留言</a>
        <a href="#"><svg width="17" height="18" viewBox="0 0 17 18" fill="none" stroke="#bbb" stroke-width="2"><path d="M1 2H16V13H1ZM4 16H13" /><path d="M9 4L7 8H9L8 11" stroke-width="2" /></svg>最快主站</a>
      </div>
      <div class="ticker"><a href="#">24小时直播:</a><span class="hl">霍尔果斯口岸前5月外贸额突破1000亿元</span><span class="tm">13</span><span class="hl end">宇宙在医疗场景中应如何落地?</span></div>
      <div class="alert"><svg width="10" height="16" viewBox="0 0 10 16"><path d="M4 1H6V10H10L5 15L0 10H4Z" fill="#33e05c" /></svg><span>*ST跨境 封跌停板</span><a href="#">[全部]</a></div>
      <div class="status">
        <label class="search"><svg width="14" height="15" viewBox="0 0 14 15" fill="none" stroke="#aaa" stroke-width="2"><circle cx="6" cy="6" r="4.500" /><path d="M9 10L13 14" /></svg><input type="text" aria-label="搜索" /></label>
        <svg width="16" height="17" viewBox="0 0 16 17"><path d="M8 0Q13 1 13 8L16 14H0L3 8Q3 1 8 0ZM6 15H10L8 17Z" fill="#ffff80" /></svg>
        <svg width="22" height="16" viewBox="0 0 22 16"><path d="M0 12H5V16H0ZM8 7H13V16H8ZM16 1H21V16H16Z" fill="#1fa84a" /></svg>
        <b>CN</b><b>06/19</b><b>14:12:54</b>
      </div>
      <div class="ime">
        <svg class="s" width="34" height="32" viewBox="0 0 34 32"><path d="M3 6Q3 4 6 4L23 0Q26 0 27 3L31 24Q31 27 28 28L9 32Q6 32 5 29L2 10Z" fill="#f4511e" /><path d="M22 8Q9 6 10 12Q11 15 17 15Q24 16 22 20Q19 25 9 22" fill="none" stroke="#fff" stroke-width="4" /></svg>
        <b>中</b>
        <svg width="18" height="18" viewBox="0 0 18 18"><circle cx="4" cy="6" r="2" fill="none" stroke="#0b6fd6" stroke-width="1.500" /><path d="M10 10H14V13L11 16L12 13H10Z" fill="#0b6fd6" /></svg>
        <svg width="18" height="18" viewBox="0 0 18 18"><circle cx="9" cy="9" r="7.500" fill="#0b6fd6" /><path d="M5 5H7V8H5ZM11 5H13V8H11ZM4 10H14Q13 14 9 14Q5 14 4 10Z" fill="#fff" /></svg>
        <svg width="18" height="18" viewBox="0 0 18 18"><rect x="6.500" y="1" width="5" height="10" rx="2.500" fill="#0b6fd6" /><path d="M3.500 8Q4 13 9 13Q14 13 14.500 8M9 13V17" fill="none" stroke="#0b6fd6" stroke-width="2" /></svg>
        <svg width="18" height="18" viewBox="0 0 18 18"><rect x="2" y="3" width="14" height="12" fill="none" stroke="#0b6fd6" stroke-width="2" /><path d="M4 7H14M4 10H14M6 13H12" stroke="#0b6fd6" stroke-width="2" stroke-dasharray="2 1" /></svg>
        <svg width="18" height="18" viewBox="0 0 18 18"><circle cx="8" cy="5" r="3.500" fill="#c4c8cf" /><path d="M2 16V12Q3 9 8 9L14 10V16Z" fill="#c4c8cf" /></svg>
        <svg width="18" height="18" viewBox="0 0 18 18"><path d="M5 2Q9 5 13 2L17 5L15 9L13 8V16H5V8L3 9L1 5Z" fill="#0b6fd6" /></svg>
        <svg width="18" height="18" viewBox="0 0 18 18"><path d="M3 3H8V8H3ZM11 3H16V8H11ZM3 11H8V16H3ZM11 11H16V16H11Z" fill="#0b6fd6" stroke="#0b6fd6" stroke-linejoin="round" /></svg>
      </div>
      <div class="gauge"><i></i></div>
    </div>

    <footer class="taskbar">
      <div class="weather">
        <svg width="32" height="26" viewBox="0 0 32 26"><circle cx="21" cy="9" r="8" fill="#f7a823" /><path d="M6 24Q0 23 1 18Q3 13 7 14Q10 6 17 9Q21 11 21 15Q27 15 27 20Q27 24 22 24Z" fill="#c4d8f3" /><path d="M28 8V15" stroke="#d7263d" stroke-width="4" stroke-linecap="round" /><circle cx="28" cy="21" r="2" fill="#d7263d" /></svg>
        <div><span>32°C</span><span class="mut">多云</span></div>
      </div>
      <div class="dock">
        <button type="button" aria-label="开始"><svg width="30" height="30" viewBox="0 0 30 30"><path d="M1 1H14V14H1ZM16 1H29V14H16ZM1 16H14V29H1ZM16 16H29V29H16Z" fill="#1c8fe0" /><path d="M1 1H14V14H1Z" fill="#38b6f0" /></svg></button>
        <button type="button" aria-label="搜索"><svg width="30" height="30" viewBox="0 0 30 30" fill="none" stroke="#2a2a2a" stroke-width="3"><circle cx="17" cy="12" r="10" /><path d="M10 19L3 28" stroke-width="4" /></svg></button>
        <button type="button" aria-label="任务视图"><svg width="30" height="30" viewBox="0 0 30 30"><path d="M0 9H23V29H0Z" fill="#2c2c2c" /><path d="M7 1H30V21H7Z" fill="#fff" opacity=".75" /></svg></button>
        <button type="button" aria-label="截图"><svg width="30" height="30" viewBox="0 0 30 30"><rect x="1" width="21" height="22" rx="2" fill="#f4f4f4" /><path d="M4 14V4H17V12" fill="none" stroke="#d83b01" stroke-width="3" stroke-dasharray="3 2" /><path d="M17 6V24M8 18H25" stroke="#7b8a99" stroke-width="3" /><circle cx="17" cy="26" r="3" fill="none" stroke="#2b9fe8" stroke-width="2" /><circle cx="26" cy="16" r="3" fill="none" stroke="#2b9fe8" stroke-width="2" /></svg></button>
        <button type="button" aria-label="浏览器" class="run"><svg width="30" height="30" viewBox="0 0 30 30" fill="none"><circle cx="15" cy="16" r="12" fill="#f2fbe9" /><path d="M24 22Q19 28 13 26Q6 24 7 15Q9 7 16 7Q24 8 23 16H8" stroke="#4cb82b" stroke-width="5" /><path d="M3 27Q2 22 7 13Q15 1 27 1" stroke="#7ecb2e" stroke-width="3" /></svg></button>
        <button type="button" aria-label="东方财富" class="run now"><svg width="30" height="30" viewBox="0 0 28 28"><circle cx="14" cy="14" r="14" fill="#ea5504" /><path d="M3 13Q11 3 20 3Q11 7 6 17Z M7 19Q13 7 21 4Q14 10 11 21Z M13 22Q14 11 22 5Q19 13 18 23Z M20 22Q19 13 23 7Q25 14 22 21Z" fill="#fff" /></svg></button>
        <button type="button" aria-label="工具" class="run"><svg width="30" height="30" viewBox="0 0 30 30"><rect width="30" height="30" rx="2" fill="#2b2f31" /><path d="M2 20Q9 21 13 16Q16 10 22 11L25 7L29 9L26 13L24 18L26 20L22 18L20 18L18 23L22 25H14L16 20Q9 23 2 20Z" fill="#7ac943" /></svg></button>
        <button type="button" aria-label="文件" class="run"><svg width="30" height="30" viewBox="0 0 30 30"><path d="M0 2H11L14 6H30V13H0Z" fill="#dba012" /><path d="M0 8H30V29H0Z" fill="#fcd04f" /><path d="M5 29V25Q5 21 8 21H22Q25 21 25 25V29Z" fill="#1079d2" /></svg></button>
        <button type="button" aria-label="文档" class="run"><svg width="30" height="30" viewBox="0 0 30 30"><path d="M7 1H29V8H7Z" fill="#41a5ee" /><path d="M7 8H29V15H7Z" fill="#2b7cd3" /><path d="M7 15H29V22H7Z" fill="#185abd" /><path d="M7 22H29V29H7Z" fill="#103f91" /><rect y="7" width="15" height="16" fill="#185abd" /><text x="1" y="20" class="w">W</text></svg></button>
        <button type="button" aria-label="阅读器" class="run"><svg width="30" height="30" viewBox="0 0 30 30"><rect width="30" height="30" rx="4" fill="#07c28e" /><path d="M8 15Q14 10 14 5Q14 12 22 13Q13 12 8 15Z" fill="none" stroke="#fff" stroke-width="2" /><text x="6" y="26" class="pdf">PDF</text></svg></button>
      </div>
      <div class="tray">
        <div class="temp"><span>71℃</span><span>CPU</span></div>
        <svg width="16" height="10" viewBox="0 0 16 10" fill="none" stroke="#222" stroke-width="2"><path d="M1 9L8 1L15 9" /></svg>
        <svg class="zh" width="18" height="20" viewBox="0 0 18 20" fill="none" stroke="#777"><path d="M1 5H7V1H11V5H17V14H11V19H7V14H1ZM4 8H14V11H4ZM9 5V14" /></svg>
        <svg class="sg" width="20" height="20" viewBox="0 0 20 20"><path d="M1 4L16 1L19 16L4 19Z" fill="#f4511e" stroke="#f4511e" stroke-width="2" stroke-linejoin="round" /><path d="M14 5Q6 5 6 8Q6 10 11 10Q15 11 13 14Q10 16 6 14" fill="none" stroke="#fff" stroke-width="3" /></svg>
        <svg width="20" height="18" viewBox="0 0 20 18" fill="none" stroke="#222" stroke-width="1.500"><path d="M1 7Q10 -2 19 7M4 10Q10 4 16 10M7 13Q10 10 13 13" /><circle cx="10" cy="15" r="1.500" fill="#222" /></svg>
        <svg width="20" height="18" viewBox="0 0 20 18" fill="none" stroke="#222" stroke-width="1.500"><path d="M1 6H4L9 2V16L4 12H1ZM12 6Q14 9 12 12M15 4Q18 9 15 14M17 2Q22 9 17 16" /></svg>
        <svg width="22" height="18" viewBox="0 0 22 18"><path d="M7 6H17V13H7Z" fill="#222" /><path d="M9 3H19V15H6V10M21 7V11M3 0V4M7 0V4M1 4H8Q8 9 5 9V17" fill="none" stroke="#222" stroke-width="1.500" /></svg>
        <div class="clock"><span>14:12</span><span>2022/6/19</span></div>
      </div>
    </footer>
  </div>
</template>

<style>
body { margin: 0; background: #060606; }
</style>

<style scoped>
.app {
  display: flex;
  flex-direction: column;
  min-width: 1200px;
  overflow: hidden;
  background: #060606;
  color: #aaa;
  font: 15px/20px "Open Sans", "Noto Sans CJK SC", sans-serif;
  white-space: nowrap;
}
.app * { box-sizing: border-box; }
button { margin: 0; padding: 0; border: 0; background: none; color: inherit; font: inherit; white-space: nowrap; }
a { color: inherit; text-decoration: none; }
svg { flex: none; display: block; }
.caret { display: inline-block; margin-left: 8px; border: 4px solid transparent; border-top-color: currentColor; border-bottom: 0; vertical-align: middle; }
.g { color: #33e05c; }

.titlebar { display: flex; align-items: center; height: 40px; padding-right: 14px; border-top: 1px solid #3c3c3c; border-bottom: 1px solid #3c3c3c; background: #262626; }
.brand { display: flex; align-items: center; width: 224px; height: 16px; padding-left: 14px; border-right: 1px solid #000; color: #ea5504; }
.brand strong { margin-left: 4px; font-size: 24px; line-height: 28px; }
.brand span { margin: 10px 0 0 8px; font-size: 14px; font-weight: 700; }
.menus { display: flex; flex: 1; padding-left: 26px; }
.menus button { width: 73px; color: #aaa; }
.quick { display: flex; gap: 15px; }
.quick button { display: flex; align-items: center; justify-content: center; gap: 5px; height: 26px; border: 1px solid #666; border-radius: 13px; font-size: 15px; color: #b4b4b4; }
.quick svg, .window-tools svg { fill: none; stroke: #a8a8a8; stroke-width: 1.5; }
.w-fast { width: 130px; }
.w-multi { width: 85px; }
.w-panel { width: 116px; }
.window-tools { display: flex; justify-content: space-between; width: 290px; margin-left: 24px; }
.mail { position: relative; }
.mail svg { stroke: #e6e67a; }
.mail b { position: absolute; left: 11px; top: -7px; padding: 0 5px; border-radius: 8px; background: #ff4040; color: #fff; font-size: 11px; line-height: 15px; font-weight: 400; }

.navbar { display: flex; align-items: center; height: 29px; padding: 2px 19px 0 20px; border-bottom: 1px solid #3c3c3c; background: #151515; color: #e6e6e6; }
.navbar a { width: 90px; }
.navbar a.wide { width: 104px; }
.navbar .more { margin: 0 auto 0 -12px; }
.navbar a.tail { width: auto; margin-left: 18px; }

.work { display: flex; align-items: stretch; }
.edge { display: flex; align-items: center; flex: none; background: linear-gradient(#060606, #060606 32%, #3a3a3a 50%, #060606 68%); }
.edge.left { width: 11px; border-left: 2px solid #333; border-right: 1px solid #333; }
.edge.right { width: 10px; border-left: 1px solid #444; padding-left: 2px; }
.side { display: flex; flex-direction: column; flex: none; width: 32px; border-right: 1px solid #444; background: #1a1a1a; color: #8a8a8a; }
.side button { display: flex; flex-direction: column; align-items: center; justify-content: center; height: 92px; padding-top: 2px; border-bottom: 1px solid #555; font-size: 14px; line-height: 23px; }
.side button.on { background: #ea5504; color: #fff; }
.side button.four { line-height: 21px; }
.side button.two { line-height: 28px; }

.main { position: relative; display: flex; flex-direction: column; flex: 1; min-width: 0; }
.toolbar { display: flex; justify-content: space-between; height: 31px; padding: 1px 2px 0 2px; }
.group { display: flex; }
.group button { display: flex; align-items: center; justify-content: center; width: 60px; height: 28px; margin-right: -1px; border: 1px solid #4a4a4a; color: #a0a0a0; line-height: 18px; }
.group button.on { position: relative; border-color: #ea5504; color: #ea5504; }
.group button.long { width: 90px; }
.group button.days { padding-left: 12px; }
.group button.sq { width: 29px; }
.group button:last-child { margin-right: 0; }
.group .caret { margin-left: 6px; }
.ff { margin-left: 4px; }

.head { display: flex; height: 28px; border-top: 1px solid #2a2a2a; }
.legend { display: flex; flex: 1; align-items: center; min-width: 0; padding: 0 0 0 5px; overflow: hidden; }
.price .head { height: 29px; }
.price .legend { padding: 0 0 0 8px; }
.price .legend, .price .opts { border-bottom: 1px solid #2a2a2a; }
.symbol { color: #ffffa0; margin-right: 10px; }
.dim { color: #6e6e6e; }
.pad { margin-right: 7px; }
.price .pad { margin-right: 8px; }
.reading { display: flex; align-items: center; flex: none; }
.reading svg { margin: 0 9px 0 5px; }
.price .reading svg { margin: 0 10px 0 6px; }
.opts { display: flex; align-items: center; gap: 11px; padding: 1px 1px 0 0; color: #8a8a8a; }
.price .opts { width: 85px; padding: 0; }
.price .opts .caret { margin-left: 6px; border-width: 3px 3px 0; }
.close { display: flex; align-items: center; justify-content: center; width: 19px; height: 19px; border: 1px solid #666; border-radius: 2px; }
.gutter { width: 74px; border-left: 1px solid #2a2a2a; }
.plot { width: 100%; height: auto; overflow: visible; font-size: 15px; }
.plot .mark { font-family: "Noto Sans CJK SC", sans-serif; font-size: 16px; }
.plot .note { font-size: 14px; }
.plot .mid { text-anchor: middle; }
.plot .axis { text-anchor: end; fill: #7c7c7c; }
.focus-box { position: absolute; left: 0; top: 0; width: 100%; height: auto; pointer-events: none; }

.templates { display: flex; align-items: center; height: 28px; padding: 0 0 0 5px; border-top: 1px solid #444; border-bottom: 1px solid #444; color: #8a8a8a; }
.templates button { width: 46px; height: 22px; margin-right: 11px; border: 1px solid #555; border-radius: 2px; }
.templates .solid { background: #383838; border-color: #383838; color: #ddd; }
.templates a { margin-right: 24px; }
.templates .last { margin: 0 0 0 -12px; color: #aaa; }
.handle { display: flex; align-items: center; justify-content: center; height: 8px; background: linear-gradient(90deg, #060606 35%, #3a3a3a 50%, #060606 65%); }
.related { display: flex; align-items: center; justify-content: space-between; height: 29px; padding-right: 6px; border-top: 1px solid #444; background: #1a1a1a; }
.related button { width: 90px; height: 28px; padding-top: 2px; background: #ea5504; color: #fff; }

.quote { position: relative; display: flex; flex-direction: column; flex: none; width: 257px; border-left: 1px solid #444; }
.summary { display: grid; grid-template-columns: 10px 1fr 10px; grid-template-rows: 26px 20px 34px; height: 88px; padding: 1px 7px 0 7px; }
.summary > svg { margin-top: 11px; }
.summary h1 { margin: 0; padding-right: 10px; color: #ffffa0; font-size: 20px; line-height: 26px; font-weight: 400; text-align: center; }
.summary .code { grid-column: 1 / 4; margin: 0; padding-right: 10px; color: #aaa; font-size: 16px; line-height: 20px; text-align: center; }
.last-price { display: flex; grid-column: 1 / 4; align-items: center; padding-left: 18px; color: #33e05c; }
.last-price strong { width: 119px; font-size: 31px; line-height: 32px; font-weight: 600; }
.last-price div { display: flex; flex-direction: column; width: 72px; font-size: 17px; line-height: 17px; font-weight: 600; }
.last-price button { display: flex; align-items: center; justify-content: center; width: 23px; height: 23px; border: 1px solid #666; }
.notice { display: flex; align-items: center; gap: 7px; height: 34px; margin: 0; padding: 0 0 1px 4px; border-top: 1px solid #444; color: #ccc; line-height: 18px; }
.depth { margin: 0; }
.depth div { display: flex; align-items: center; height: 30px; padding: 0 9px 2px 6px; border-top: 1px solid #444; font-size: 17px; }
.depth dt { width: 66px; font-size: 18px; color: #7c7c7c; }
.depth dd { margin: 0; font-weight: 700; color: #ddd; }
.depth dd.g { flex: 1; color: #33e05c; }
.ticks-head { display: flex; align-items: center; justify-content: space-between; height: 32px; padding: 0 7px 0 4px; border-top: 1px solid #444; border-bottom: 1px solid #444; background: #1a1a1a; }
.ticks-head h2 { margin: 0; font-size: 18px; font-weight: 400; color: #8a8a8a; }
.ticks-head button { width: 23px; height: 23px; background: #3a3a3a; color: #ccc; font-size: 18px; }
.ticks { width: 238px; border-collapse: collapse; table-layout: fixed; font-size: 17px; line-height: 20px; }
.ticks th { height: 24px; padding: 0; font-size: 18px; font-weight: 400; color: #7c7c7c; text-align: right; }
.ticks th:first-child { width: 48px; text-align: left; padding-left: 4px; }
.ticks th:nth-child(2) { width: 105px; }
.ticks th:nth-child(3) { width: 14px; }
.ticks td { height: 20px; padding: 0; text-align: right; color: #7c7c7c; }
.ticks tr:nth-child(5n) td { height: 21px; }
.ticks td.first { color: #bbb; font-weight: 700; }
.ticks td.p { color: #33e05c; font-weight: 700; }
.ticks td.ar { padding-left: 2px; }
.ticks td.v { color: #33e05c; font-weight: 700; }
.ticks td.hot { color: #ff5454; }
.scroll-up { position: absolute; right: 1px; top: 241px; }

.indices { display: flex; align-items: stretch; height: 27px; border-top: 1px solid #444; color: #ff5454; font-size: 17px; line-height: 29px; }
.indices > div { flex: none; border-right: 1px solid #444; text-align: center; }
.indices b { font-weight: 700; font-size: 17px; }
.indices .nm { color: #999; font-size: 18px; }
.c1, .c2 { width: 37px; }
.c3 { width: 83px; }
.indices .ix { display: flex; width: 374px; padding-left: 13px; text-align: left; }
.indices .ix.wide { width: 397px; padding-left: 8px; }
.indices .ix.end { flex: 1; border: 0; }
.v1 { width: 89px; }
.wide .v1 { width: 95px; }
.end .v1 { width: 95px; }
.tri { width: 24px; }
.v2 { width: 57px; }
.wide .v2 { width: 69px; }
.end .v2 { width: 62px; }
.v3 { width: 74px; }
.wide .v3 { width: 79px; }
.n { padding-right: 4px; line-height: 25px; margin: 2px 0; }
.n.w { border: 1px solid #444; border-width: 0 1px; padding: 0 3px; margin-right: 3px; color: #ccc; }
.indices .amt { width: 94px; color: #00ffff; }
.indices .thru { width: 149px; font-size: 18px; }

.news { position: relative; display: flex; align-items: center; height: 28px; border-top: 1px solid #444; background: #222; }
.links { display: flex; align-items: center; gap: 13px; width: 163px; height: 27px; padding: 2px 0 0 12px; border-right: 1px solid #444; }
.links a { display: flex; align-items: center; gap: 2px; }
.ticker { display: flex; align-items: center; flex: 1; min-width: 0; height: 27px; padding: 2px 0 0 10px; overflow: hidden; border-right: 1px solid #444; }
.ticker a { text-decoration: underline; }
.ticker .hl { margin-left: 4px; color: #ccc; font-size: 18px; }
.ticker .tm { margin-left: 32px; color: #888; font-size: 18px; }
.ticker .end { margin-left: auto; }
.alert { display: flex; align-items: center; width: 241px; height: 27px; padding-left: 7px; border-right: 1px solid #444; }
.alert span { margin-left: 20px; flex: 1; color: #33e05c; font-size: 18px; }
.alert a { margin-right: 4px; }
.status { display: flex; align-items: center; gap: 10px; width: 341px; padding-left: 6px; overflow: hidden; font: 700 18px/20px "Liberation Sans", "Noto Sans CJK SC", sans-serif; color: #999; }
.search { display: flex; align-items: center; flex: none; width: 99px; height: 20px; padding-left: 8px; border-radius: 10px; background: #555; }
.search input { width: 70px; height: 18px; border: 0; padding: 0 4px; background: none; color: #ddd; outline: none; }
.ime { position: absolute; left: 631px; top: 3px; display: flex; align-items: center; gap: 6px; width: 225px; height: 24px; padding-left: 35px; border: 1px solid #a8c8f0; border-radius: 2px; background: #fff; }
.ime b { width: 18px; color: #0b6fd6; font-size: 16px; }
.ime .s { position: absolute; left: -2px; top: -5px; }
.gauge { position: absolute; right: 1px; bottom: 10px; display: flex; align-items: flex-end; width: 12px; height: 76px; padding: 1px; border: 2px solid #666; border-radius: 6px; }
.gauge i { width: 100%; height: 32px; background: repeating-linear-gradient(#33e05c 0 2px, transparent 2px 4px); }

.taskbar { display: flex; align-items: center; height: 61px; padding-top: 2px; background: #dedede; color: #1a1a1a; font-size: 14px; line-height: 20px; }
.weather { display: flex; align-items: center; gap: 7px; flex: none; width: 32%; padding-left: 26px; }
.weather div, .temp, .clock { display: flex; flex-direction: column; }
.weather .mut { color: #555; }
.dock { display: flex; gap: 7px; padding-left: 4px; }
.dock button { position: relative; display: flex; align-items: center; justify-content: center; width: 49px; height: 49px; border-radius: 4px; }
.dock .now { background: #eaeaea; box-shadow: 0 0 0 1px #d0d0d0; }
.dock .run::after { content: ""; position: absolute; bottom: -1px; width: 8px; height: 4px; border-radius: 2px; background: #777; }
.dock .now::after { width: 12px; background: #0b78d0; }
.dock text { fill: #fff; font-weight: 700; }
.dock .w { font-size: 12px; }
.dock .pdf { font-size: 9px; }
.tray { display: flex; flex: 1; align-items: center; justify-content: flex-end; gap: 12px; padding-right: 20px; }
.zh { margin: 0 14px 0 6px; }
.sg { margin-right: 14px; }
.temp { text-align: center; font-weight: 600; }
.clock { margin-left: 5px; text-align: right; }
</style>
